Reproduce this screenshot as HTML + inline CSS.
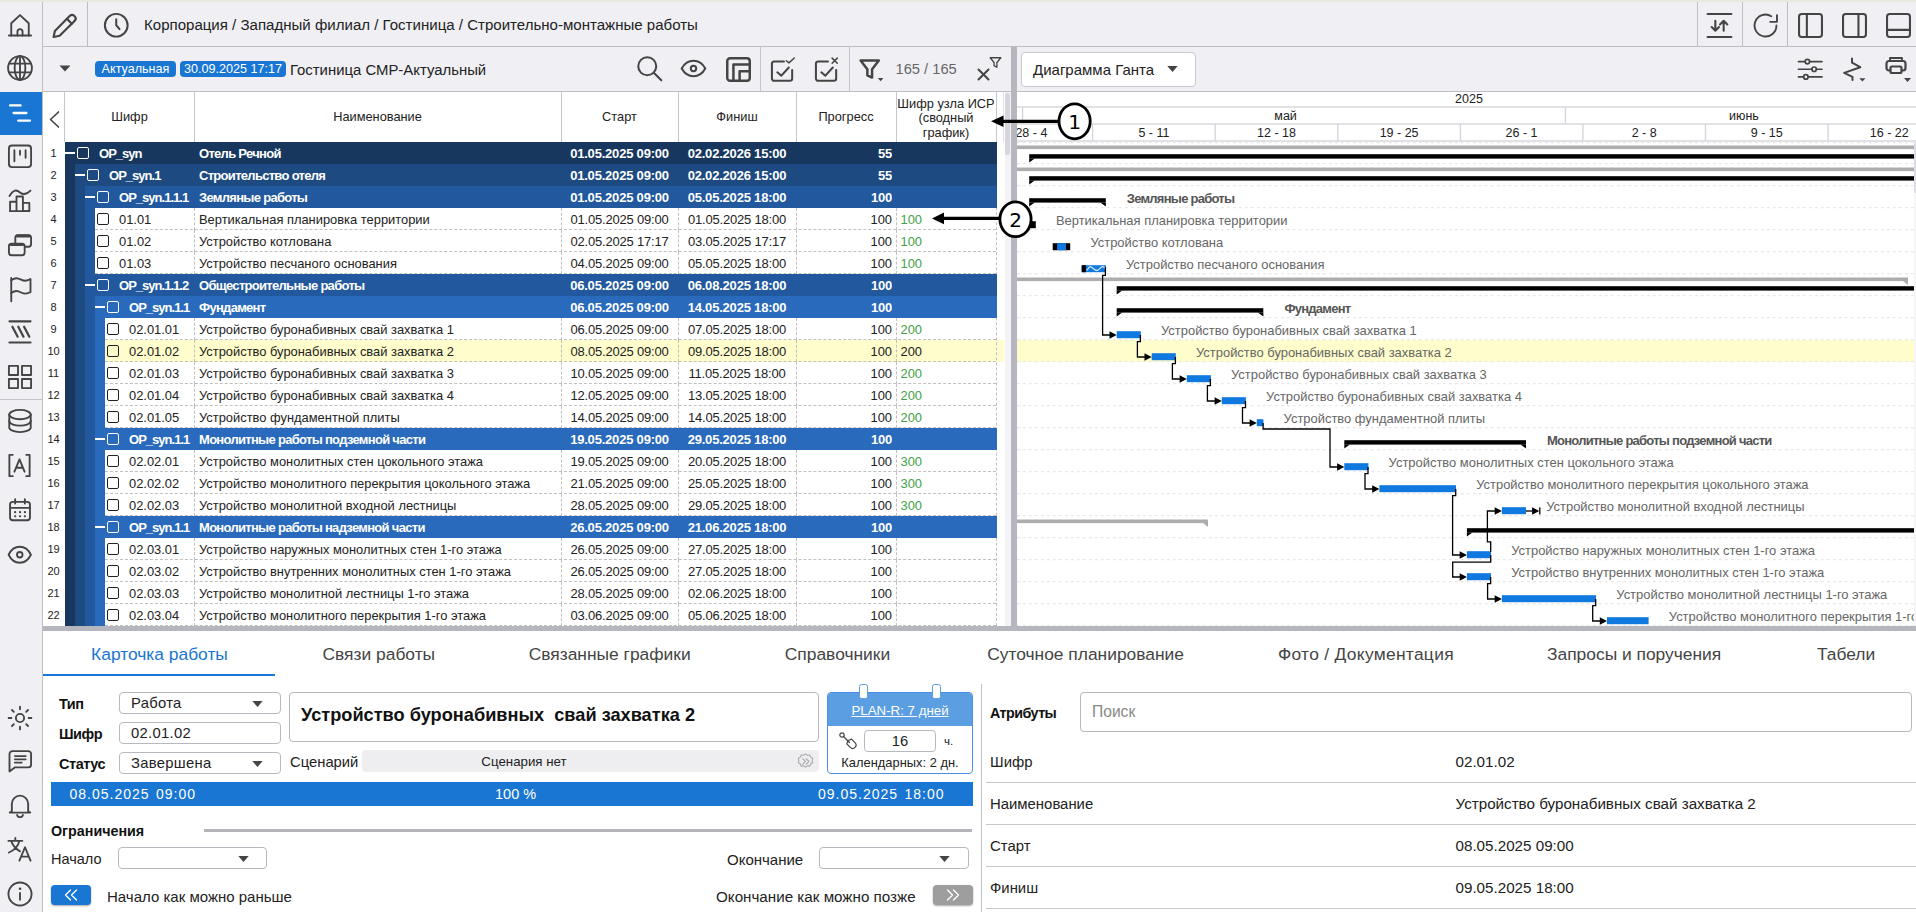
<!DOCTYPE html><html lang="ru"><head><meta charset="utf-8"><title>Gantt</title><style>
*{box-sizing:border-box}
html,body{margin:0;padding:0}
body{width:1916px;height:912px;position:relative;overflow:hidden;background:#fff;
 font-family:"Liberation Sans",sans-serif;color:#222;font-size:13px}
.abs{position:absolute}
.t{position:absolute;white-space:nowrap;line-height:1}
svg{position:absolute;overflow:visible}
.ic{fill:none;stroke:#444;stroke-width:1.8;stroke-linecap:round;stroke-linejoin:round}

.th{position:absolute;top:92.400px;height:50px;display:flex;align-items:center;justify-content:center;text-align:center;font-size:12.8px;color:#222;line-height:14.300px}
.rn{position:absolute;left:43px;width:21px;text-align:center;font-size:11px;color:#222;line-height:23.400px;height:22px}
.c{position:absolute;white-space:nowrap;overflow:hidden;height:22px;line-height:23px;font-size:12.900px}
.sb{font-weight:bold;color:#fff;letter-spacing:-0.7px;font-size:13px}
.sc{font-weight:bold;color:#fff;letter-spacing:-0.98px;font-size:13px}
.sd{font-weight:bold;color:#fff;letter-spacing:-0.2px;font-size:13px}
.dt{letter-spacing:-0.2px;font-size:13px}
.cb{position:absolute;width:12px;height:12px;border-radius:2px}
</style></head><body>
<div class="abs" style="left:0;top:0;width:1916px;height:92px;background:#f0f0f4"></div>
<div class="abs" style="left:0;top:0;width:42px;height:912px;background:#f0f0f4"></div>
<div class="abs" style="left:0;top:0;width:1916px;height:2px;background:#e6e9dd"></div>
<div class="abs" style="left:42px;top:2px;width:1px;height:910px;background:#bdbdc6"></div>
<div class="abs" style="left:43px;top:46px;width:1873px;height:1px;background:#bdbdc6"></div>
<div class="abs" style="left:43px;top:91px;width:1873px;height:1px;background:#bdbdc6"></div>
<div class="abs" style="left:0;top:92px;width:42px;height:43px;background:#1976d2"></div>
<svg style="left:5.8px;top:10.5px" width="28" height="28" viewBox="0 0 24 24" fill="none" stroke="#444" stroke-width="1.6" stroke-linecap="round" stroke-linejoin="round"><path d="M2.5 21h19"/><path d="M4.5 21V10.5L12 3.5l7.500 7V21"/><path d="M9.800 21v-3.300a2.200 2.200 0 0 1 4.400 0V21"/></svg>
<svg style="left:5.8px;top:54.4px" width="28" height="28" viewBox="0 0 24 24" fill="none" stroke="#444" stroke-width="1.6" stroke-linecap="round" stroke-linejoin="round"><circle cx="12" cy="12" r="10.200"/><ellipse cx="12" cy="12" rx="4.600" ry="10.200"/><path d="M12 1.800v20.400M2.800 8.300h18.400M2.800 15.700h18.400"/></svg>
<svg style="left:5.8px;top:98.8px" width="28" height="28" viewBox="0 0 24 24" fill="none" stroke="#fff" stroke-width="2.0" stroke-linecap="round" stroke-linejoin="round"><path d="M3.500 5.500h9M6.500 12h11M10.500 18.500h10"/></svg>
<svg style="left:5.8px;top:142.0px" width="28" height="28" viewBox="0 0 24 24" fill="none" stroke="#444" stroke-width="1.6" stroke-linecap="round" stroke-linejoin="round"><rect x="2.500" y="3" width="19" height="18.500" rx="2.600"/><path d="M7.200 7v9.500M12 7.500v3.500M16.800 7v6.500"/></svg>
<svg style="left:5.8px;top:186.0px" width="28" height="28" viewBox="0 0 24 24" fill="none" stroke="#444" stroke-width="1.6" stroke-linecap="round" stroke-linejoin="round"><path d="M3.500 21.500v-8h5.500v8M9 21.500v-12.500h5.500v12.500M14.500 21.500v-7h5.500v7z"/><path d="M3.500 21.500h16.500"/><path d="M3 8.500c3.500-5.500 6-5.500 9-3s6 1.500 9-1.500"/></svg>
<svg style="left:5.8px;top:231.0px" width="28" height="28" viewBox="0 0 24 24" fill="none" stroke="#444" stroke-width="1.6" stroke-linecap="round" stroke-linejoin="round"><rect x="8" y="3.500" width="13.500" height="10" rx="2.300"/><path d="M9.500 4.300h10.500" stroke-width="2.400"/><rect x="2.500" y="10.800" width="13.500" height="10" rx="2.300" fill="#f0f0f4"/><path d="M4 11.600h10.500" stroke-width="2.400"/></svg>
<svg style="left:5.8px;top:274.5px" width="28" height="28" viewBox="0 0 24 24" fill="none" stroke="#444" stroke-width="1.6" stroke-linecap="round" stroke-linejoin="round"><path d="M4.500 2.500v20"/><path d="M4.500 4.500c3.500-2.500 5.500-2 8.500-0.500s5 1.500 8-0.500v11c-3 2-5 2-8 0.500s-5-2-8.500 0.500"/></svg>
<svg style="left:5.8px;top:318.0px" width="28" height="28" viewBox="0 0 24 24" fill="none" stroke="#444" stroke-width="1.6" stroke-linecap="round" stroke-linejoin="round"><path d="M3 2.800h18M3 21h18" stroke-width="1.900"/><path d="M5.500 7.500l4.500 8.500M10.500 7.500l4.500 8.500M15.500 7.500l4.500 8.500" stroke-width="1.900"/></svg>
<svg style="left:5.8px;top:362.6px" width="28" height="28" viewBox="0 0 24 24" fill="none" stroke="#444" stroke-width="1.6" stroke-linecap="round" stroke-linejoin="round"><rect x="2.500" y="2.500" width="7.800" height="7.800"/><rect x="13.700" y="2.500" width="7.800" height="7.800"/><rect x="2.500" y="13.700" width="7.800" height="7.800"/><rect x="13.700" y="13.700" width="7.800" height="7.800"/></svg>
<svg style="left:5.8px;top:407.3px" width="28" height="28" viewBox="0 0 24 24" fill="none" stroke="#444" stroke-width="1.6" stroke-linecap="round" stroke-linejoin="round"><ellipse cx="12" cy="6.500" rx="9.200" ry="4"/><path d="M2.800 6.500v11c0 2.200 4.100 4 9.200 4s9.200-1.800 9.200-4v-11"/><path d="M2.800 12c0 2.200 4.100 4 9.200 4s9.200-1.800 9.200-4"/></svg>
<svg style="left:6.3px;top:452.1px" width="27" height="27" viewBox="0 0 24 24" fill="none" stroke="#444" stroke-width="1.6592592592592594" stroke-linecap="round" stroke-linejoin="round"><path d="M6 2.500H3v19h3M18 2.500h3v19h-3"/><path d="M7.500 17.500L12 6.500l4.500 11M9 14h6"/></svg>
<svg style="left:6.8px;top:496.5px" width="26" height="26" viewBox="0 0 24 24" fill="none" stroke="#444" stroke-width="1.7230769230769232" stroke-linecap="round" stroke-linejoin="round"><rect x="2.800" y="4.500" width="18.400" height="17" rx="2.500"/><path d="M2.800 10h18.400M7.500 2v4M16.500 2v4"/><path d="M7.500 14h.1M12 14h.1M16.500 14h.1M7.500 17.800h.1M12 17.800h.1M16.500 17.800h.1" stroke-width="2"/></svg>
<svg style="left:7.1px;top:541.5px" width="25.5" height="25.5" viewBox="0 0 24 24" fill="none" stroke="#444" stroke-width="1.7568627450980394" stroke-linecap="round" stroke-linejoin="round"><path d="M1.500 12c2.500-5 6-7.500 10.500-7.500s8 2.500 10.500 7.500c-2.500 5-6 7.500-10.500 7.500s-8-2.500-10.500-7.500z"/><circle cx="12" cy="12" r="2.600"/></svg>
<svg style="left:6.8px;top:705.0px" width="26" height="26" viewBox="0 0 24 24" fill="none" stroke="#444" stroke-width="1.7230769230769232" stroke-linecap="round" stroke-linejoin="round"><circle cx="12" cy="12" r="3.800"/><path d="M12 1.500v2.500M12 20v2.500M1.500 12h2.500M20 12h2.500M4.600 4.600l1.700 1.700M17.700 17.700l1.700 1.700M4.600 19.400l1.700-1.700M17.700 6.300l1.700-1.700"/></svg>
<svg style="left:5.8px;top:747.0px" width="28" height="28" viewBox="0 0 24 24" fill="none" stroke="#444" stroke-width="1.6" stroke-linecap="round" stroke-linejoin="round"><path d="M5.500 3.500h13.500a2.500 2.500 0 0 1 2.500 2.500v9a2.500 2.500 0 0 1-2.500 2.500H7.500l-4.500 3.500V6a2.500 2.500 0 0 1 2.500-2.500z"/><path d="M7.500 7.800h9.500M7.500 10.600h9.500M7.500 13.400h6" stroke-width="1.400"/></svg>
<svg style="left:5.8px;top:791.3px" width="28" height="28" viewBox="0 0 24 24" fill="none" stroke="#444" stroke-width="1.6" stroke-linecap="round" stroke-linejoin="round"><path d="M5 17.500V11a7 7 0 0 1 14 0v6.500l1.800 1H3.200z" /><path d="M9.500 20.500a2.600 2.600 0 0 0 5 0"/></svg>
<svg style="left:5.8px;top:835.0px" width="28" height="28" viewBox="0 0 24 24" fill="none" stroke="#444" stroke-width="1.6" stroke-linecap="round" stroke-linejoin="round"><path d="M2 5h12M8 2.500V5M11.500 5c-1 4.500-4.500 8-9 10M4.500 5c1 4 4 7 7.500 9"/><path d="M11.500 22l4.800-11.500L21 22M13 18.500h6.600"/></svg>
<svg style="left:5.8px;top:880.2px" width="28" height="28" viewBox="0 0 24 24" fill="none" stroke="#444" stroke-width="1.6" stroke-linecap="round" stroke-linejoin="round"><circle cx="12" cy="12" r="9.900"/><path d="M12 11v6"/><path d="M12 7.500h.1" stroke-width="2.200"/></svg>
<div class="abs" style="left:0;top:399px;width:42px;height:1px;background:#c4c4cc"></div>
<svg style="left:50.0px;top:10.5px" width="29" height="29" viewBox="0 0 24 24" fill="none" stroke="#444" stroke-width="1.8" stroke-linecap="round" stroke-linejoin="round"><path d="M3 21.500l1-5L16.500 4a2.500 2.500 0 0 1 3.500 0l0.500 0.500a2.500 2.500 0 0 1 0 3.500L8 20.500z"/><path d="M14 6.500l4 4"/></svg>
<div class="abs" style="left:87px;top:2px;width:1px;height:44px;background:#bdbdc6"></div>
<svg style="left:102.8px;top:11.8px" width="26.5" height="26.5" viewBox="0 0 24 24" fill="none" stroke="#444" stroke-width="1.8" stroke-linecap="round" stroke-linejoin="round"><circle cx="12" cy="12" r="10.300"/><path d="M12 6.500V12l3 3.500"/></svg>
<div class="t" style="left:144px;top:17px;font-size:15.05px;color:#222">Корпорация / Западный филиал / Гостиница / Строительно-монтажные работы</div>
<div class="abs" style="left:1697px;top:2px;width:1px;height:44px;background:#bdbdc6"></div>
<div class="abs" style="left:1742px;top:2px;width:1px;height:44px;background:#bdbdc6"></div>
<div class="abs" style="left:1787px;top:2px;width:1px;height:44px;background:#bdbdc6"></div>
<svg style="left:1707.3px;top:12.5px" width="25" height="25" viewBox="0 0 24 24" fill="none" stroke="#444" stroke-width="1.8" stroke-linecap="round" stroke-linejoin="round"><path d="M0.500 1h23M0.500 23h23"/><path d="M8 7.500v9.500M4.500 13.500L8 17l3.500-3.500M16 17V7.500M12.500 11L16 7.500l3.500 3.500" stroke-width="2"/></svg>
<svg style="left:1752.5px;top:12.5px" width="25" height="25" viewBox="0 0 24 24" fill="none" stroke="#444" stroke-width="1.8" stroke-linecap="round" stroke-linejoin="round"><path d="M22.500 12A10.500 10.500 0 1 1 17.500 3.100"/><path d="M16.500 8.500h6.500V2"/></svg>
<svg style="left:1797.5px;top:12.5px" width="25" height="25" viewBox="0 0 24 24" fill="none" stroke="#444" stroke-width="2" stroke-linecap="round" stroke-linejoin="round"><rect x="1" y="1" width="22" height="22" rx="2.500"/><path d="M8.500 1v22"/></svg>
<svg style="left:1841.5px;top:12.5px" width="25" height="25" viewBox="0 0 24 24" fill="none" stroke="#444" stroke-width="2" stroke-linecap="round" stroke-linejoin="round"><rect x="1" y="1" width="22" height="22" rx="2.500"/><path d="M15.800 1v22"/></svg>
<svg style="left:1885.5px;top:12.5px" width="25" height="25" viewBox="0 0 24 24" fill="none" stroke="#444" stroke-width="2" stroke-linecap="round" stroke-linejoin="round"><rect x="1" y="1" width="22" height="22" rx="2.500"/><path d="M1 16.200h22"/></svg>
<svg style="left:59px;top:65px" width="12" height="7" viewBox="0 0 12 7"><path d="M0.500 0.500h11L6 6.500z" fill="#444"/></svg>
<div class="t" style="left:95px;top:61px;width:81px;height:16px;background:#1976d2;border-radius:4px;color:#fff;font-size:12.6px;line-height:16px;text-align:center">Актуальная</div>
<div class="t" style="left:180px;top:61px;width:106px;height:16px;background:#1976d2;border-radius:4px;color:#fff;font-size:12.6px;line-height:16px;text-align:center">30.09.2025 17:17</div>
<div class="t" style="left:290px;top:63px;font-size:14.9px;color:#222">Гостиница СМР-Актуальный</div>
<svg style="left:635.5px;top:55.3px" width="27" height="27" viewBox="0 0 24 24" fill="none" stroke="#444" stroke-width="1.8" stroke-linecap="round" stroke-linejoin="round"><circle cx="10" cy="10" r="8"/><path d="M15.800 15.800L22.500 22.500"/></svg>
<svg style="left:680.2px;top:55.1px" width="27" height="27" viewBox="0 0 24 24" fill="none" stroke="#444" stroke-width="1.8" stroke-linecap="round" stroke-linejoin="round"><path d="M1.500 12c2.500-4.500 6-6.800 10.500-6.800s8 2.300 10.500 6.800c-2.500 4.500-6 6.800-10.500 6.800s-8-2.300-10.500-6.800z"/><circle cx="12" cy="12" r="2.400"/></svg>
<svg style="left:724.5px;top:55.5px" width="27" height="27" viewBox="0 0 24 24" fill="none" stroke="#444" stroke-width="1.8" stroke-linecap="round" stroke-linejoin="round"><rect x="2" y="2" width="20" height="20" rx="2.500" stroke-width="2.200"/><path d="M7.500 22V7.500H22M13 22v-8.500h9" stroke-width="2.200"/></svg>
<div class="abs" style="left:760px;top:47px;width:1px;height:44px;background:#c4c4cc"></div>
<svg style="left:768.9px;top:56.5px" width="27" height="27" viewBox="0 0 24 24" fill="none" stroke="#444" stroke-width="1.8" stroke-linecap="round" stroke-linejoin="round"><path d="M20.600 11.500v7.700a2 2 0 0 1-2 2H4.600a2 2 0 0 1-2-2V5.900a2 2 0 0 1 2-2h8.700"/><path d="M7.400 13.600l3.600 3l6.600-7.300"/><path d="M15.400 3.300l2.300 1.900l4.800-4.300" stroke-width="1.300"/></svg>
<svg style="left:813.2px;top:56.5px" width="27" height="27" viewBox="0 0 24 24" fill="none" stroke="#444" stroke-width="1.8" stroke-linecap="round" stroke-linejoin="round"><path d="M20.600 11.500v7.700a2 2 0 0 1-2 2H4.600a2 2 0 0 1-2-2V5.900a2 2 0 0 1 2-2h8.700"/><path d="M7.400 13.600l3.600 3l6.600-7.300"/><path d="M17 1l4.600 4.500M21.600 1l-4.600 4.500" stroke-width="1.300"/></svg>
<div class="abs" style="left:849px;top:47px;width:1px;height:44px;background:#c4c4cc"></div>
<svg style="left:857.0px;top:55.5px" width="27" height="27" viewBox="0 0 24 24" fill="none" stroke="#444" stroke-width="1.8" stroke-linecap="round" stroke-linejoin="round"><path d="M3.200 4h16.200l-6 7.800v7.400l-4.200-2v-5.400z" stroke-width="2.200"/><path d="M18.500 19.600h5l-2.500 2.800z" fill="#444" stroke="none"/></svg>
<div class="t" style="left:895.5px;top:62px;font-size:14.7px;color:#666">165 / 165</div>
<svg style="left:976.5px;top:68.0px" width="13" height="13" viewBox="0 0 13 13" fill="none" stroke="#444" stroke-width="2" stroke-linecap="round" stroke-linejoin="round"><path d="M1.500 1.500l10 10M11.500 1.500l-10 10"/></svg>
<svg style="left:988.7px;top:55.8px" width="13" height="13" viewBox="0 0 11 11" fill="none" stroke="#444" stroke-width="1.1" stroke-linecap="round" stroke-linejoin="round"><path d="M1 1.500h9l-3.300 4v4l-2.400-1.300v-2.700z"/></svg>
<div class="abs" style="left:1021px;top:51.500px;width:175px;height:35.500px;background:#fff;border:1px solid #c8c8d0;border-radius:4px"></div>
<div class="t" style="left:1033px;top:62px;font-size:15px;color:#222">Диаграмма Ганта</div>
<svg style="left:1167px;top:66px" width="11" height="6" viewBox="0 0 11 6"><path d="M0.300 0h10.400L5.500 6z" fill="#444"/></svg>
<svg style="left:1797.8px;top:56.8px" width="24.5" height="24.5" viewBox="0 0 24 24" fill="none" stroke="#444" stroke-width="1.7" stroke-linecap="round" stroke-linejoin="round"><path d="M0.500 4.500h6.500M11.500 4.500h12M0.500 12h13M18 12h5.500M0.500 19.500h5M10 19.500h13.500"/><circle cx="9.200" cy="4.500" r="2.200"/><circle cx="15.800" cy="12" r="2.200"/><circle cx="7.700" cy="19.500" r="2.200"/></svg>
<svg style="left:1840.0px;top:56.5px" width="25" height="25" viewBox="0 0 24 24" fill="none" stroke="#444" stroke-width="1.8" stroke-linecap="round" stroke-linejoin="round"><path d="M11.500 1.500v4l8 4.300L4 15.300l8 3.700v3" stroke-width="1.900"/><path d="M18.500 20.500h6l-3 3z" fill="#444" stroke="none"/></svg>
<svg style="left:1885.0px;top:56.0px" width="22" height="22" viewBox="0 0 22 22" fill="none" stroke="#444" stroke-width="1.8" stroke-linecap="round" stroke-linejoin="round"><path d="M5 5V2h12v3"/><rect x="1.500" y="5" width="19" height="9.500" rx="2.500" stroke-width="2.200"/><rect x="5.500" y="10.500" width="11" height="6.500" rx="1.500" fill="#f0f0f4" stroke-width="2.200"/></svg>
<svg style="left:1903.500px;top:78px" width="7" height="4" viewBox="0 0 7 4"><path d="M0 0h7L3.500 4z" fill="#444"/></svg>
<div class="abs" style="left:43px;top:92px;width:968px;height:534px;background:#fff"></div>
<div class="th" style="left:65px;width:129px">Шифр</div>
<div class="th" style="left:194px;width:367px">Наименование</div>
<div class="th" style="left:561px;width:117px">Старт</div>
<div class="th" style="left:678px;width:118px">Финиш</div>
<div class="th" style="left:796px;width:100px">Прогресс</div>
<div class="th" style="left:896px;width:100px;top:93.400px;line-height:14.500px">Шифр узла ИСР<br>(сводный<br>график)</div>
<div class="abs" style="left:64px;top:92px;width:1px;height:50px;background:#c6c6ce"></div>
<div class="abs" style="left:194px;top:92px;width:1px;height:50px;background:#c6c6ce"></div>
<div class="abs" style="left:561px;top:92px;width:1px;height:50px;background:#c6c6ce"></div>
<div class="abs" style="left:678px;top:92px;width:1px;height:50px;background:#c6c6ce"></div>
<div class="abs" style="left:796px;top:92px;width:1px;height:50px;background:#c6c6ce"></div>
<div class="abs" style="left:896px;top:92px;width:1px;height:50px;background:#c6c6ce"></div>
<div class="abs" style="left:996px;top:92px;width:1px;height:50px;background:#c6c6ce"></div>
<svg style="left:49px;top:111px" width="11" height="17" viewBox="0 0 11 17" fill="none" stroke="#444" stroke-width="1.700" stroke-linecap="round" stroke-linejoin="round"><path d="M9.500 1L1.500 8.500l8 7.500"/></svg>
<div class="abs" style="left:996px;top:142px;width:0;height:484px;border-left:1px dashed #c0c0c0"></div>
<div class="rn" style="top:142px">1</div>
<div class="abs" style="left:65px;top:142px;width:932px;height:22px;background:#17375f"></div>
<div class="abs" style="left:65.3px;top:152px;width:9.400px;height:2px;background:#fff"></div>
<div class="cb" style="left:77px;top:147px;border:1.500px solid #fff"></div>
<div class="c sc" style="left:99px;top:142px;width:95px">OP_syn</div>
<div class="c sb" style="left:199px;top:142px;width:360px">Отель Речной</div>
<div class="c sd" style="left:561px;top:142px;width:117px;text-align:center">01.05.2025 09:00</div>
<div class="c sd" style="left:678px;top:142px;width:118px;text-align:center">02.02.2026 15:00</div>
<div class="c sd" style="left:796px;top:142px;width:96px;text-align:right">55</div>
<div class="rn" style="top:164px">2</div>
<div class="abs" style="left:65px;top:164px;width:10px;height:22px;background:#17375f"></div>
<div class="abs" style="left:75px;top:164px;width:922px;height:22px;background:#1d4a80"></div>
<div class="abs" style="left:75.3px;top:174px;width:9.400px;height:2px;background:#fff"></div>
<div class="cb" style="left:87px;top:169px;border:1.500px solid #fff"></div>
<div class="c sc" style="left:109px;top:164px;width:85px">OP_syn.1</div>
<div class="c sb" style="left:199px;top:164px;width:360px">Строительство отеля</div>
<div class="c sd" style="left:561px;top:164px;width:117px;text-align:center">01.05.2025 09:00</div>
<div class="c sd" style="left:678px;top:164px;width:118px;text-align:center">02.02.2026 15:00</div>
<div class="c sd" style="left:796px;top:164px;width:96px;text-align:right">55</div>
<div class="rn" style="top:186px">3</div>
<div class="abs" style="left:65px;top:186px;width:10px;height:22px;background:#17375f"></div>
<div class="abs" style="left:75px;top:186px;width:10px;height:22px;background:#1d4a80"></div>
<div class="abs" style="left:85px;top:186px;width:912px;height:22px;background:#22589d"></div>
<div class="abs" style="left:85.3px;top:196px;width:9.400px;height:2px;background:#fff"></div>
<div class="cb" style="left:97px;top:191px;border:1.500px solid #fff"></div>
<div class="c sc" style="left:119px;top:186px;width:75px">OP_syn.1.1.1</div>
<div class="c sb" style="left:199px;top:186px;width:360px">Земляные работы</div>
<div class="c sd" style="left:561px;top:186px;width:117px;text-align:center">01.05.2025 09:00</div>
<div class="c sd" style="left:678px;top:186px;width:118px;text-align:center">05.05.2025 18:00</div>
<div class="c sd" style="left:796px;top:186px;width:96px;text-align:right">100</div>
<div class="rn" style="top:208px">4</div>
<div class="abs" style="left:65px;top:208px;width:10px;height:22px;background:#17375f"></div>
<div class="abs" style="left:75px;top:208px;width:10px;height:22px;background:#1d4a80"></div>
<div class="abs" style="left:85px;top:208px;width:10px;height:22px;background:#22589d"></div>
<div class="abs" style="left:95px;top:208px;width:901px;height:22px;background:#fff;border-bottom:1px dashed #c0c0c0"></div>
<div class="abs" style="left:194px;top:208px;width:0;height:22px;border-left:1px dashed #c0c0c0"></div>
<div class="abs" style="left:561px;top:208px;width:0;height:22px;border-left:1px dashed #c0c0c0"></div>
<div class="abs" style="left:678px;top:208px;width:0;height:22px;border-left:1px dashed #c0c0c0"></div>
<div class="abs" style="left:796px;top:208px;width:0;height:22px;border-left:1px dashed #c0c0c0"></div>
<div class="abs" style="left:896px;top:208px;width:0;height:22px;border-left:1px dashed #c0c0c0"></div>
<div class="cb" style="left:97px;top:213px;border:1.500px solid #222;background:#fff"></div>
<div class="c" style="left:119px;top:208px;width:75px">01.01</div>
<div class="c" style="left:199px;top:208px;width:360px">Вертикальная планировка территории</div>
<div class="c dt" style="left:561px;top:208px;width:117px;text-align:center">01.05.2025 09:00</div>
<div class="c dt" style="left:678px;top:208px;width:118px;text-align:center">01.05.2025 18:00</div>
<div class="c" style="left:796px;top:208px;width:96px;text-align:right">100</div>
<div class="c" style="left:900.500px;top:208px;width:90px;color:#43a047">100</div>
<div class="rn" style="top:230px">5</div>
<div class="abs" style="left:65px;top:230px;width:10px;height:22px;background:#17375f"></div>
<div class="abs" style="left:75px;top:230px;width:10px;height:22px;background:#1d4a80"></div>
<div class="abs" style="left:85px;top:230px;width:10px;height:22px;background:#22589d"></div>
<div class="abs" style="left:95px;top:230px;width:901px;height:22px;background:#fff;border-bottom:1px dashed #c0c0c0"></div>
<div class="abs" style="left:194px;top:230px;width:0;height:22px;border-left:1px dashed #c0c0c0"></div>
<div class="abs" style="left:561px;top:230px;width:0;height:22px;border-left:1px dashed #c0c0c0"></div>
<div class="abs" style="left:678px;top:230px;width:0;height:22px;border-left:1px dashed #c0c0c0"></div>
<div class="abs" style="left:796px;top:230px;width:0;height:22px;border-left:1px dashed #c0c0c0"></div>
<div class="abs" style="left:896px;top:230px;width:0;height:22px;border-left:1px dashed #c0c0c0"></div>
<div class="cb" style="left:97px;top:235px;border:1.500px solid #222;background:#fff"></div>
<div class="c" style="left:119px;top:230px;width:75px">01.02</div>
<div class="c" style="left:199px;top:230px;width:360px">Устройство котлована</div>
<div class="c dt" style="left:561px;top:230px;width:117px;text-align:center">02.05.2025 17:17</div>
<div class="c dt" style="left:678px;top:230px;width:118px;text-align:center">03.05.2025 17:17</div>
<div class="c" style="left:796px;top:230px;width:96px;text-align:right">100</div>
<div class="c" style="left:900.500px;top:230px;width:90px;color:#43a047">100</div>
<div class="rn" style="top:252px">6</div>
<div class="abs" style="left:65px;top:252px;width:10px;height:22px;background:#17375f"></div>
<div class="abs" style="left:75px;top:252px;width:10px;height:22px;background:#1d4a80"></div>
<div class="abs" style="left:85px;top:252px;width:10px;height:22px;background:#22589d"></div>
<div class="abs" style="left:95px;top:252px;width:901px;height:22px;background:#fff;border-bottom:1px dashed #c0c0c0"></div>
<div class="abs" style="left:194px;top:252px;width:0;height:22px;border-left:1px dashed #c0c0c0"></div>
<div class="abs" style="left:561px;top:252px;width:0;height:22px;border-left:1px dashed #c0c0c0"></div>
<div class="abs" style="left:678px;top:252px;width:0;height:22px;border-left:1px dashed #c0c0c0"></div>
<div class="abs" style="left:796px;top:252px;width:0;height:22px;border-left:1px dashed #c0c0c0"></div>
<div class="abs" style="left:896px;top:252px;width:0;height:22px;border-left:1px dashed #c0c0c0"></div>
<div class="cb" style="left:97px;top:257px;border:1.500px solid #222;background:#fff"></div>
<div class="c" style="left:119px;top:252px;width:75px">01.03</div>
<div class="c" style="left:199px;top:252px;width:360px">Устройство песчаного основания</div>
<div class="c dt" style="left:561px;top:252px;width:117px;text-align:center">04.05.2025 09:00</div>
<div class="c dt" style="left:678px;top:252px;width:118px;text-align:center">05.05.2025 18:00</div>
<div class="c" style="left:796px;top:252px;width:96px;text-align:right">100</div>
<div class="c" style="left:900.500px;top:252px;width:90px;color:#43a047">100</div>
<div class="rn" style="top:274px">7</div>
<div class="abs" style="left:65px;top:274px;width:10px;height:22px;background:#17375f"></div>
<div class="abs" style="left:75px;top:274px;width:10px;height:22px;background:#1d4a80"></div>
<div class="abs" style="left:85px;top:274px;width:912px;height:22px;background:#22589d"></div>
<div class="abs" style="left:85.3px;top:284px;width:9.400px;height:2px;background:#fff"></div>
<div class="cb" style="left:97px;top:279px;border:1.500px solid #fff"></div>
<div class="c sc" style="left:119px;top:274px;width:75px">OP_syn.1.1.2</div>
<div class="c sb" style="left:199px;top:274px;width:360px">Общестроительные работы</div>
<div class="c sd" style="left:561px;top:274px;width:117px;text-align:center">06.05.2025 09:00</div>
<div class="c sd" style="left:678px;top:274px;width:118px;text-align:center">06.08.2025 18:00</div>
<div class="c sd" style="left:796px;top:274px;width:96px;text-align:right">100</div>
<div class="rn" style="top:296px">8</div>
<div class="abs" style="left:65px;top:296px;width:10px;height:22px;background:#17375f"></div>
<div class="abs" style="left:75px;top:296px;width:10px;height:22px;background:#1d4a80"></div>
<div class="abs" style="left:85px;top:296px;width:10px;height:22px;background:#22589d"></div>
<div class="abs" style="left:95px;top:296px;width:902px;height:22px;background:#2a6abc"></div>
<div class="abs" style="left:95.3px;top:306px;width:9.400px;height:2px;background:#fff"></div>
<div class="cb" style="left:107px;top:301px;border:1.500px solid #fff"></div>
<div class="c sc" style="left:129px;top:296px;width:65px">OP_syn.1.1</div>
<div class="c sb" style="left:199px;top:296px;width:360px">Фундамент</div>
<div class="c sd" style="left:561px;top:296px;width:117px;text-align:center">06.05.2025 09:00</div>
<div class="c sd" style="left:678px;top:296px;width:118px;text-align:center">14.05.2025 18:00</div>
<div class="c sd" style="left:796px;top:296px;width:96px;text-align:right">100</div>
<div class="rn" style="top:318px">9</div>
<div class="abs" style="left:65px;top:318px;width:10px;height:22px;background:#17375f"></div>
<div class="abs" style="left:75px;top:318px;width:10px;height:22px;background:#1d4a80"></div>
<div class="abs" style="left:85px;top:318px;width:10px;height:22px;background:#22589d"></div>
<div class="abs" style="left:95px;top:318px;width:10px;height:22px;background:#2a6abc"></div>
<div class="abs" style="left:105px;top:318px;width:891px;height:22px;background:#fff;border-bottom:1px dashed #c0c0c0"></div>
<div class="abs" style="left:194px;top:318px;width:0;height:22px;border-left:1px dashed #c0c0c0"></div>
<div class="abs" style="left:561px;top:318px;width:0;height:22px;border-left:1px dashed #c0c0c0"></div>
<div class="abs" style="left:678px;top:318px;width:0;height:22px;border-left:1px dashed #c0c0c0"></div>
<div class="abs" style="left:796px;top:318px;width:0;height:22px;border-left:1px dashed #c0c0c0"></div>
<div class="abs" style="left:896px;top:318px;width:0;height:22px;border-left:1px dashed #c0c0c0"></div>
<div class="cb" style="left:107px;top:323px;border:1.500px solid #222;background:#fff"></div>
<div class="c" style="left:129px;top:318px;width:65px">02.01.01</div>
<div class="c" style="left:199px;top:318px;width:360px">Устройство буронабивных свай захватка 1</div>
<div class="c dt" style="left:561px;top:318px;width:117px;text-align:center">06.05.2025 09:00</div>
<div class="c dt" style="left:678px;top:318px;width:118px;text-align:center">07.05.2025 18:00</div>
<div class="c" style="left:796px;top:318px;width:96px;text-align:right">100</div>
<div class="c" style="left:900.500px;top:318px;width:90px;color:#43a047">200</div>
<div class="rn" style="top:340px">10</div>
<div class="abs" style="left:65px;top:340px;width:10px;height:22px;background:#17375f"></div>
<div class="abs" style="left:75px;top:340px;width:10px;height:22px;background:#1d4a80"></div>
<div class="abs" style="left:85px;top:340px;width:10px;height:22px;background:#22589d"></div>
<div class="abs" style="left:95px;top:340px;width:10px;height:22px;background:#2a6abc"></div>
<div class="abs" style="left:105px;top:340px;width:891px;height:22px;background:#fffdcc;border-bottom:1px dashed #c0c0c0"></div>
<div class="abs" style="left:194px;top:340px;width:0;height:22px;border-left:1px dashed #c0c0c0"></div>
<div class="abs" style="left:561px;top:340px;width:0;height:22px;border-left:1px dashed #c0c0c0"></div>
<div class="abs" style="left:678px;top:340px;width:0;height:22px;border-left:1px dashed #c0c0c0"></div>
<div class="abs" style="left:796px;top:340px;width:0;height:22px;border-left:1px dashed #c0c0c0"></div>
<div class="abs" style="left:896px;top:340px;width:0;height:22px;border-left:1px dashed #c0c0c0"></div>
<div class="cb" style="left:107px;top:345px;border:1.500px solid #222;background:#fffdcc"></div>
<div class="c" style="left:129px;top:340px;width:65px">02.01.02</div>
<div class="c" style="left:199px;top:340px;width:360px">Устройство буронабивных свай захватка 2</div>
<div class="c dt" style="left:561px;top:340px;width:117px;text-align:center">08.05.2025 09:00</div>
<div class="c dt" style="left:678px;top:340px;width:118px;text-align:center">09.05.2025 18:00</div>
<div class="c" style="left:796px;top:340px;width:96px;text-align:right">100</div>
<div class="c" style="left:900.500px;top:340px;width:90px;color:#222">200</div>
<div class="rn" style="top:362px">11</div>
<div class="abs" style="left:65px;top:362px;width:10px;height:22px;background:#17375f"></div>
<div class="abs" style="left:75px;top:362px;width:10px;height:22px;background:#1d4a80"></div>
<div class="abs" style="left:85px;top:362px;width:10px;height:22px;background:#22589d"></div>
<div class="abs" style="left:95px;top:362px;width:10px;height:22px;background:#2a6abc"></div>
<div class="abs" style="left:105px;top:362px;width:891px;height:22px;background:#fff;border-bottom:1px dashed #c0c0c0"></div>
<div class="abs" style="left:194px;top:362px;width:0;height:22px;border-left:1px dashed #c0c0c0"></div>
<div class="abs" style="left:561px;top:362px;width:0;height:22px;border-left:1px dashed #c0c0c0"></div>
<div class="abs" style="left:678px;top:362px;width:0;height:22px;border-left:1px dashed #c0c0c0"></div>
<div class="abs" style="left:796px;top:362px;width:0;height:22px;border-left:1px dashed #c0c0c0"></div>
<div class="abs" style="left:896px;top:362px;width:0;height:22px;border-left:1px dashed #c0c0c0"></div>
<div class="cb" style="left:107px;top:367px;border:1.500px solid #222;background:#fff"></div>
<div class="c" style="left:129px;top:362px;width:65px">02.01.03</div>
<div class="c" style="left:199px;top:362px;width:360px">Устройство буронабивных свай захватка 3</div>
<div class="c dt" style="left:561px;top:362px;width:117px;text-align:center">10.05.2025 09:00</div>
<div class="c dt" style="left:678px;top:362px;width:118px;text-align:center">11.05.2025 18:00</div>
<div class="c" style="left:796px;top:362px;width:96px;text-align:right">100</div>
<div class="c" style="left:900.500px;top:362px;width:90px;color:#43a047">200</div>
<div class="rn" style="top:384px">12</div>
<div class="abs" style="left:65px;top:384px;width:10px;height:22px;background:#17375f"></div>
<div class="abs" style="left:75px;top:384px;width:10px;height:22px;background:#1d4a80"></div>
<div class="abs" style="left:85px;top:384px;width:10px;height:22px;background:#22589d"></div>
<div class="abs" style="left:95px;top:384px;width:10px;height:22px;background:#2a6abc"></div>
<div class="abs" style="left:105px;top:384px;width:891px;height:22px;background:#fff;border-bottom:1px dashed #c0c0c0"></div>
<div class="abs" style="left:194px;top:384px;width:0;height:22px;border-left:1px dashed #c0c0c0"></div>
<div class="abs" style="left:561px;top:384px;width:0;height:22px;border-left:1px dashed #c0c0c0"></div>
<div class="abs" style="left:678px;top:384px;width:0;height:22px;border-left:1px dashed #c0c0c0"></div>
<div class="abs" style="left:796px;top:384px;width:0;height:22px;border-left:1px dashed #c0c0c0"></div>
<div class="abs" style="left:896px;top:384px;width:0;height:22px;border-left:1px dashed #c0c0c0"></div>
<div class="cb" style="left:107px;top:389px;border:1.500px solid #222;background:#fff"></div>
<div class="c" style="left:129px;top:384px;width:65px">02.01.04</div>
<div class="c" style="left:199px;top:384px;width:360px">Устройство буронабивных свай захватка 4</div>
<div class="c dt" style="left:561px;top:384px;width:117px;text-align:center">12.05.2025 09:00</div>
<div class="c dt" style="left:678px;top:384px;width:118px;text-align:center">13.05.2025 18:00</div>
<div class="c" style="left:796px;top:384px;width:96px;text-align:right">100</div>
<div class="c" style="left:900.500px;top:384px;width:90px;color:#43a047">200</div>
<div class="rn" style="top:406px">13</div>
<div class="abs" style="left:65px;top:406px;width:10px;height:22px;background:#17375f"></div>
<div class="abs" style="left:75px;top:406px;width:10px;height:22px;background:#1d4a80"></div>
<div class="abs" style="left:85px;top:406px;width:10px;height:22px;background:#22589d"></div>
<div class="abs" style="left:95px;top:406px;width:10px;height:22px;background:#2a6abc"></div>
<div class="abs" style="left:105px;top:406px;width:891px;height:22px;background:#fff;border-bottom:1px dashed #c0c0c0"></div>
<div class="abs" style="left:194px;top:406px;width:0;height:22px;border-left:1px dashed #c0c0c0"></div>
<div class="abs" style="left:561px;top:406px;width:0;height:22px;border-left:1px dashed #c0c0c0"></div>
<div class="abs" style="left:678px;top:406px;width:0;height:22px;border-left:1px dashed #c0c0c0"></div>
<div class="abs" style="left:796px;top:406px;width:0;height:22px;border-left:1px dashed #c0c0c0"></div>
<div class="abs" style="left:896px;top:406px;width:0;height:22px;border-left:1px dashed #c0c0c0"></div>
<div class="cb" style="left:107px;top:411px;border:1.500px solid #222;background:#fff"></div>
<div class="c" style="left:129px;top:406px;width:65px">02.01.05</div>
<div class="c" style="left:199px;top:406px;width:360px">Устройство фундаментной плиты</div>
<div class="c dt" style="left:561px;top:406px;width:117px;text-align:center">14.05.2025 09:00</div>
<div class="c dt" style="left:678px;top:406px;width:118px;text-align:center">14.05.2025 18:00</div>
<div class="c" style="left:796px;top:406px;width:96px;text-align:right">100</div>
<div class="c" style="left:900.500px;top:406px;width:90px;color:#43a047">200</div>
<div class="rn" style="top:428px">14</div>
<div class="abs" style="left:65px;top:428px;width:10px;height:22px;background:#17375f"></div>
<div class="abs" style="left:75px;top:428px;width:10px;height:22px;background:#1d4a80"></div>
<div class="abs" style="left:85px;top:428px;width:10px;height:22px;background:#22589d"></div>
<div class="abs" style="left:95px;top:428px;width:902px;height:22px;background:#2a6abc"></div>
<div class="abs" style="left:95.3px;top:438px;width:9.400px;height:2px;background:#fff"></div>
<div class="cb" style="left:107px;top:433px;border:1.500px solid #fff"></div>
<div class="c sc" style="left:129px;top:428px;width:65px">OP_syn.1.1</div>
<div class="c sb" style="left:199px;top:428px;width:360px">Монолитные работы подземной части</div>
<div class="c sd" style="left:561px;top:428px;width:117px;text-align:center">19.05.2025 09:00</div>
<div class="c sd" style="left:678px;top:428px;width:118px;text-align:center">29.05.2025 18:00</div>
<div class="c sd" style="left:796px;top:428px;width:96px;text-align:right">100</div>
<div class="rn" style="top:450px">15</div>
<div class="abs" style="left:65px;top:450px;width:10px;height:22px;background:#17375f"></div>
<div class="abs" style="left:75px;top:450px;width:10px;height:22px;background:#1d4a80"></div>
<div class="abs" style="left:85px;top:450px;width:10px;height:22px;background:#22589d"></div>
<div class="abs" style="left:95px;top:450px;width:10px;height:22px;background:#2a6abc"></div>
<div class="abs" style="left:105px;top:450px;width:891px;height:22px;background:#fff;border-bottom:1px dashed #c0c0c0"></div>
<div class="abs" style="left:194px;top:450px;width:0;height:22px;border-left:1px dashed #c0c0c0"></div>
<div class="abs" style="left:561px;top:450px;width:0;height:22px;border-left:1px dashed #c0c0c0"></div>
<div class="abs" style="left:678px;top:450px;width:0;height:22px;border-left:1px dashed #c0c0c0"></div>
<div class="abs" style="left:796px;top:450px;width:0;height:22px;border-left:1px dashed #c0c0c0"></div>
<div class="abs" style="left:896px;top:450px;width:0;height:22px;border-left:1px dashed #c0c0c0"></div>
<div class="cb" style="left:107px;top:455px;border:1.500px solid #222;background:#fff"></div>
<div class="c" style="left:129px;top:450px;width:65px">02.02.01</div>
<div class="c" style="left:199px;top:450px;width:360px">Устройство монолитных стен цокольного этажа</div>
<div class="c dt" style="left:561px;top:450px;width:117px;text-align:center">19.05.2025 09:00</div>
<div class="c dt" style="left:678px;top:450px;width:118px;text-align:center">20.05.2025 18:00</div>
<div class="c" style="left:796px;top:450px;width:96px;text-align:right">100</div>
<div class="c" style="left:900.500px;top:450px;width:90px;color:#43a047">300</div>
<div class="rn" style="top:472px">16</div>
<div class="abs" style="left:65px;top:472px;width:10px;height:22px;background:#17375f"></div>
<div class="abs" style="left:75px;top:472px;width:10px;height:22px;background:#1d4a80"></div>
<div class="abs" style="left:85px;top:472px;width:10px;height:22px;background:#22589d"></div>
<div class="abs" style="left:95px;top:472px;width:10px;height:22px;background:#2a6abc"></div>
<div class="abs" style="left:105px;top:472px;width:891px;height:22px;background:#fff;border-bottom:1px dashed #c0c0c0"></div>
<div class="abs" style="left:194px;top:472px;width:0;height:22px;border-left:1px dashed #c0c0c0"></div>
<div class="abs" style="left:561px;top:472px;width:0;height:22px;border-left:1px dashed #c0c0c0"></div>
<div class="abs" style="left:678px;top:472px;width:0;height:22px;border-left:1px dashed #c0c0c0"></div>
<div class="abs" style="left:796px;top:472px;width:0;height:22px;border-left:1px dashed #c0c0c0"></div>
<div class="abs" style="left:896px;top:472px;width:0;height:22px;border-left:1px dashed #c0c0c0"></div>
<div class="cb" style="left:107px;top:477px;border:1.500px solid #222;background:#fff"></div>
<div class="c" style="left:129px;top:472px;width:65px">02.02.02</div>
<div class="c" style="left:199px;top:472px;width:360px">Устройство монолитного перекрытия цокольного этажа</div>
<div class="c dt" style="left:561px;top:472px;width:117px;text-align:center">21.05.2025 09:00</div>
<div class="c dt" style="left:678px;top:472px;width:118px;text-align:center">25.05.2025 18:00</div>
<div class="c" style="left:796px;top:472px;width:96px;text-align:right">100</div>
<div class="c" style="left:900.500px;top:472px;width:90px;color:#43a047">300</div>
<div class="rn" style="top:494px">17</div>
<div class="abs" style="left:65px;top:494px;width:10px;height:22px;background:#17375f"></div>
<div class="abs" style="left:75px;top:494px;width:10px;height:22px;background:#1d4a80"></div>
<div class="abs" style="left:85px;top:494px;width:10px;height:22px;background:#22589d"></div>
<div class="abs" style="left:95px;top:494px;width:10px;height:22px;background:#2a6abc"></div>
<div class="abs" style="left:105px;top:494px;width:891px;height:22px;background:#fff;border-bottom:1px dashed #c0c0c0"></div>
<div class="abs" style="left:194px;top:494px;width:0;height:22px;border-left:1px dashed #c0c0c0"></div>
<div class="abs" style="left:561px;top:494px;width:0;height:22px;border-left:1px dashed #c0c0c0"></div>
<div class="abs" style="left:678px;top:494px;width:0;height:22px;border-left:1px dashed #c0c0c0"></div>
<div class="abs" style="left:796px;top:494px;width:0;height:22px;border-left:1px dashed #c0c0c0"></div>
<div class="abs" style="left:896px;top:494px;width:0;height:22px;border-left:1px dashed #c0c0c0"></div>
<div class="cb" style="left:107px;top:499px;border:1.500px solid #222;background:#fff"></div>
<div class="c" style="left:129px;top:494px;width:65px">02.02.03</div>
<div class="c" style="left:199px;top:494px;width:360px">Устройство монолитной входной лестницы</div>
<div class="c dt" style="left:561px;top:494px;width:117px;text-align:center">28.05.2025 09:00</div>
<div class="c dt" style="left:678px;top:494px;width:118px;text-align:center">29.05.2025 18:00</div>
<div class="c" style="left:796px;top:494px;width:96px;text-align:right">100</div>
<div class="c" style="left:900.500px;top:494px;width:90px;color:#43a047">300</div>
<div class="rn" style="top:516px">18</div>
<div class="abs" style="left:65px;top:516px;width:10px;height:22px;background:#17375f"></div>
<div class="abs" style="left:75px;top:516px;width:10px;height:22px;background:#1d4a80"></div>
<div class="abs" style="left:85px;top:516px;width:10px;height:22px;background:#22589d"></div>
<div class="abs" style="left:95px;top:516px;width:902px;height:22px;background:#2a6abc"></div>
<div class="abs" style="left:95.3px;top:526px;width:9.400px;height:2px;background:#fff"></div>
<div class="cb" style="left:107px;top:521px;border:1.500px solid #fff"></div>
<div class="c sc" style="left:129px;top:516px;width:65px">OP_syn.1.1</div>
<div class="c sb" style="left:199px;top:516px;width:360px">Монолитные работы надземной части</div>
<div class="c sd" style="left:561px;top:516px;width:117px;text-align:center">26.05.2025 09:00</div>
<div class="c sd" style="left:678px;top:516px;width:118px;text-align:center">21.06.2025 18:00</div>
<div class="c sd" style="left:796px;top:516px;width:96px;text-align:right">100</div>
<div class="rn" style="top:538px">19</div>
<div class="abs" style="left:65px;top:538px;width:10px;height:22px;background:#17375f"></div>
<div class="abs" style="left:75px;top:538px;width:10px;height:22px;background:#1d4a80"></div>
<div class="abs" style="left:85px;top:538px;width:10px;height:22px;background:#22589d"></div>
<div class="abs" style="left:95px;top:538px;width:10px;height:22px;background:#2a6abc"></div>
<div class="abs" style="left:105px;top:538px;width:891px;height:22px;background:#fff;border-bottom:1px dashed #c0c0c0"></div>
<div class="abs" style="left:194px;top:538px;width:0;height:22px;border-left:1px dashed #c0c0c0"></div>
<div class="abs" style="left:561px;top:538px;width:0;height:22px;border-left:1px dashed #c0c0c0"></div>
<div class="abs" style="left:678px;top:538px;width:0;height:22px;border-left:1px dashed #c0c0c0"></div>
<div class="abs" style="left:796px;top:538px;width:0;height:22px;border-left:1px dashed #c0c0c0"></div>
<div class="abs" style="left:896px;top:538px;width:0;height:22px;border-left:1px dashed #c0c0c0"></div>
<div class="cb" style="left:107px;top:543px;border:1.500px solid #222;background:#fff"></div>
<div class="c" style="left:129px;top:538px;width:65px">02.03.01</div>
<div class="c" style="left:199px;top:538px;width:360px">Устройство наружных монолитных стен 1-го этажа</div>
<div class="c dt" style="left:561px;top:538px;width:117px;text-align:center">26.05.2025 09:00</div>
<div class="c dt" style="left:678px;top:538px;width:118px;text-align:center">27.05.2025 18:00</div>
<div class="c" style="left:796px;top:538px;width:96px;text-align:right">100</div>
<div class="rn" style="top:560px">20</div>
<div class="abs" style="left:65px;top:560px;width:10px;height:22px;background:#17375f"></div>
<div class="abs" style="left:75px;top:560px;width:10px;height:22px;background:#1d4a80"></div>
<div class="abs" style="left:85px;top:560px;width:10px;height:22px;background:#22589d"></div>
<div class="abs" style="left:95px;top:560px;width:10px;height:22px;background:#2a6abc"></div>
<div class="abs" style="left:105px;top:560px;width:891px;height:22px;background:#fff;border-bottom:1px dashed #c0c0c0"></div>
<div class="abs" style="left:194px;top:560px;width:0;height:22px;border-left:1px dashed #c0c0c0"></div>
<div class="abs" style="left:561px;top:560px;width:0;height:22px;border-left:1px dashed #c0c0c0"></div>
<div class="abs" style="left:678px;top:560px;width:0;height:22px;border-left:1px dashed #c0c0c0"></div>
<div class="abs" style="left:796px;top:560px;width:0;height:22px;border-left:1px dashed #c0c0c0"></div>
<div class="abs" style="left:896px;top:560px;width:0;height:22px;border-left:1px dashed #c0c0c0"></div>
<div class="cb" style="left:107px;top:565px;border:1.500px solid #222;background:#fff"></div>
<div class="c" style="left:129px;top:560px;width:65px">02.03.02</div>
<div class="c" style="left:199px;top:560px;width:360px">Устройство внутренних монолитных стен 1-го этажа</div>
<div class="c dt" style="left:561px;top:560px;width:117px;text-align:center">26.05.2025 09:00</div>
<div class="c dt" style="left:678px;top:560px;width:118px;text-align:center">27.05.2025 18:00</div>
<div class="c" style="left:796px;top:560px;width:96px;text-align:right">100</div>
<div class="rn" style="top:582px">21</div>
<div class="abs" style="left:65px;top:582px;width:10px;height:22px;background:#17375f"></div>
<div class="abs" style="left:75px;top:582px;width:10px;height:22px;background:#1d4a80"></div>
<div class="abs" style="left:85px;top:582px;width:10px;height:22px;background:#22589d"></div>
<div class="abs" style="left:95px;top:582px;width:10px;height:22px;background:#2a6abc"></div>
<div class="abs" style="left:105px;top:582px;width:891px;height:22px;background:#fff;border-bottom:1px dashed #c0c0c0"></div>
<div class="abs" style="left:194px;top:582px;width:0;height:22px;border-left:1px dashed #c0c0c0"></div>
<div class="abs" style="left:561px;top:582px;width:0;height:22px;border-left:1px dashed #c0c0c0"></div>
<div class="abs" style="left:678px;top:582px;width:0;height:22px;border-left:1px dashed #c0c0c0"></div>
<div class="abs" style="left:796px;top:582px;width:0;height:22px;border-left:1px dashed #c0c0c0"></div>
<div class="abs" style="left:896px;top:582px;width:0;height:22px;border-left:1px dashed #c0c0c0"></div>
<div class="cb" style="left:107px;top:587px;border:1.500px solid #222;background:#fff"></div>
<div class="c" style="left:129px;top:582px;width:65px">02.03.03</div>
<div class="c" style="left:199px;top:582px;width:360px">Устройство монолитной лестницы 1-го этажа</div>
<div class="c dt" style="left:561px;top:582px;width:117px;text-align:center">28.05.2025 09:00</div>
<div class="c dt" style="left:678px;top:582px;width:118px;text-align:center">02.06.2025 18:00</div>
<div class="c" style="left:796px;top:582px;width:96px;text-align:right">100</div>
<div class="rn" style="top:604px">22</div>
<div class="abs" style="left:65px;top:604px;width:10px;height:22px;background:#17375f"></div>
<div class="abs" style="left:75px;top:604px;width:10px;height:22px;background:#1d4a80"></div>
<div class="abs" style="left:85px;top:604px;width:10px;height:22px;background:#22589d"></div>
<div class="abs" style="left:95px;top:604px;width:10px;height:22px;background:#2a6abc"></div>
<div class="abs" style="left:105px;top:604px;width:891px;height:22px;background:#fff;border-bottom:1px dashed #c0c0c0"></div>
<div class="abs" style="left:194px;top:604px;width:0;height:22px;border-left:1px dashed #c0c0c0"></div>
<div class="abs" style="left:561px;top:604px;width:0;height:22px;border-left:1px dashed #c0c0c0"></div>
<div class="abs" style="left:678px;top:604px;width:0;height:22px;border-left:1px dashed #c0c0c0"></div>
<div class="abs" style="left:796px;top:604px;width:0;height:22px;border-left:1px dashed #c0c0c0"></div>
<div class="abs" style="left:896px;top:604px;width:0;height:22px;border-left:1px dashed #c0c0c0"></div>
<div class="cb" style="left:107px;top:609px;border:1.500px solid #222;background:#fff"></div>
<div class="c" style="left:129px;top:604px;width:65px">02.03.04</div>
<div class="c" style="left:199px;top:604px;width:360px">Устройство монолитного перекрытия 1-го этажа</div>
<div class="c dt" style="left:561px;top:604px;width:117px;text-align:center">03.06.2025 09:00</div>
<div class="c dt" style="left:678px;top:604px;width:118px;text-align:center">05.06.2025 18:00</div>
<div class="c" style="left:796px;top:604px;width:96px;text-align:right">100</div>
<div class="abs" style="left:997px;top:340px;width:7px;height:22px;background:#fffdcc"></div>
<div class="abs" style="left:1005px;top:92px;width:6px;height:534px;background:#f3f3f6"></div>
<div class="abs" style="left:1003px;top:92px;width:1px;height:50px;background:#e0e0e6"></div>
<div class="abs" style="left:1005px;top:93px;width:5px;height:62px;background:#d6d6dc;border-radius:2.500px"></div>
<div class="abs" style="left:1017px;top:92px;width:899px;height:534px;background:#fff;overflow:hidden">
<svg style="left:0;top:0" width="899" height="534" viewBox="1017 92 899 534" font-family="Liberation Sans, sans-serif">
<rect x="1017" y="340" width="899" height="22" fill="#fffdcc"/>
<rect x="1017" y="106.3" width="899" height="1.400" fill="#d6d6dc"/>
<rect x="1017" y="123.3" width="899" height="1.400" fill="#d6d6dc"/>
<rect x="1017" y="140.3" width="899" height="1.400" fill="#d6d6dc"/>
<rect x="1021.9" y="107" width="1.400" height="17" fill="#d6d6dc"/>
<rect x="1564.7" y="107" width="1.400" height="17" fill="#d6d6dc"/>
<rect x="1091.9" y="124" width="1.400" height="17" fill="#d6d6dc"/>
<text x="1031.4" y="137.300" text-anchor="middle" font-size="12.500" fill="#222">28 - 4</text>
<rect x="1214.5" y="124" width="1.400" height="17" fill="#d6d6dc"/>
<text x="1153.9" y="137.300" text-anchor="middle" font-size="12.500" fill="#222">5 - 11</text>
<rect x="1337.1" y="124" width="1.400" height="17" fill="#d6d6dc"/>
<text x="1276.5" y="137.300" text-anchor="middle" font-size="12.500" fill="#222">12 - 18</text>
<rect x="1459.7" y="124" width="1.400" height="17" fill="#d6d6dc"/>
<text x="1399.1" y="137.300" text-anchor="middle" font-size="12.500" fill="#222">19 - 25</text>
<rect x="1582.2" y="124" width="1.400" height="17" fill="#d6d6dc"/>
<text x="1521.6" y="137.300" text-anchor="middle" font-size="12.500" fill="#222">26 - 1</text>
<rect x="1704.8" y="124" width="1.400" height="17" fill="#d6d6dc"/>
<text x="1644.2" y="137.300" text-anchor="middle" font-size="12.500" fill="#222">2 - 8</text>
<rect x="1827.4" y="124" width="1.400" height="17" fill="#d6d6dc"/>
<text x="1766.8" y="137.300" text-anchor="middle" font-size="12.500" fill="#222">9 - 15</text>
<rect x="1949.9" y="124" width="1.400" height="17" fill="#d6d6dc"/>
<text x="1889.3" y="137.300" text-anchor="middle" font-size="12.500" fill="#222">16 - 22</text>
<text x="1469" y="103.200" text-anchor="middle" font-size="12.500" fill="#222">2025</text>
<text x="1285.600" y="120.200" text-anchor="middle" font-size="12.500" fill="#222">май</text>
<text x="1744" y="120.200" text-anchor="middle" font-size="12.500" fill="#222">июнь</text>
<path d="M1017 142.700H1916" stroke="#e8e8e8" stroke-width="1.200" stroke-dasharray="2.600 3.400" fill="none"/>
<path d="M1017 163.7H1916" stroke="#e6e6e6" stroke-width="1.200" stroke-dasharray="2.600 3.400" fill="none"/>
<path d="M1017 185.7H1916" stroke="#e6e6e6" stroke-width="1.200" stroke-dasharray="2.600 3.400" fill="none"/>
<path d="M1017 207.7H1916" stroke="#e6e6e6" stroke-width="1.200" stroke-dasharray="2.600 3.400" fill="none"/>
<path d="M1017 229.7H1916" stroke="#e6e6e6" stroke-width="1.200" stroke-dasharray="2.600 3.400" fill="none"/>
<path d="M1017 251.7H1916" stroke="#e6e6e6" stroke-width="1.200" stroke-dasharray="2.600 3.400" fill="none"/>
<path d="M1017 273.7H1916" stroke="#e6e6e6" stroke-width="1.200" stroke-dasharray="2.600 3.400" fill="none"/>
<path d="M1017 295.7H1916" stroke="#e6e6e6" stroke-width="1.200" stroke-dasharray="2.600 3.400" fill="none"/>
<path d="M1017 317.7H1916" stroke="#e6e6e6" stroke-width="1.200" stroke-dasharray="2.600 3.400" fill="none"/>
<path d="M1017 339.7H1916" stroke="#e6e6e6" stroke-width="1.200" stroke-dasharray="2.600 3.400" fill="none"/>
<path d="M1017 361.7H1916" stroke="#e6e6e6" stroke-width="1.200" stroke-dasharray="2.600 3.400" fill="none"/>
<path d="M1017 383.7H1916" stroke="#e6e6e6" stroke-width="1.200" stroke-dasharray="2.600 3.400" fill="none"/>
<path d="M1017 405.7H1916" stroke="#e6e6e6" stroke-width="1.200" stroke-dasharray="2.600 3.400" fill="none"/>
<path d="M1017 427.7H1916" stroke="#e6e6e6" stroke-width="1.200" stroke-dasharray="2.600 3.400" fill="none"/>
<path d="M1017 449.7H1916" stroke="#e6e6e6" stroke-width="1.200" stroke-dasharray="2.600 3.400" fill="none"/>
<path d="M1017 471.7H1916" stroke="#e6e6e6" stroke-width="1.200" stroke-dasharray="2.600 3.400" fill="none"/>
<path d="M1017 493.7H1916" stroke="#e6e6e6" stroke-width="1.200" stroke-dasharray="2.600 3.400" fill="none"/>
<path d="M1017 515.7H1916" stroke="#e6e6e6" stroke-width="1.200" stroke-dasharray="2.600 3.400" fill="none"/>
<path d="M1017 537.7H1916" stroke="#e6e6e6" stroke-width="1.200" stroke-dasharray="2.600 3.400" fill="none"/>
<path d="M1017 559.7H1916" stroke="#e6e6e6" stroke-width="1.200" stroke-dasharray="2.600 3.400" fill="none"/>
<path d="M1017 581.7H1916" stroke="#e6e6e6" stroke-width="1.200" stroke-dasharray="2.600 3.400" fill="none"/>
<path d="M1017 603.7H1916" stroke="#e6e6e6" stroke-width="1.200" stroke-dasharray="2.600 3.400" fill="none"/>
<path d="M1017 625.7H1916" stroke="#e6e6e6" stroke-width="1.200" stroke-dasharray="2.600 3.400" fill="none"/>
<rect x="1017" y="145.5" width="899" height="3.600" fill="#adadad"/>
<rect x="1017" y="167.5" width="899" height="3.600" fill="#adadad"/>
<rect x="1017" y="277.5" width="891" height="3.600" fill="#adadad"/><path d="M1903 281H1908V285z" fill="#adadad"/>
<rect x="1017" y="519.5" width="191" height="3.600" fill="#adadad"/><path d="M1203 523H1208V527z" fill="#adadad"/>
<rect x="1029.2" y="154.2" width="906.8" height="4.400" fill="#000"/>
<path d="M1029.2 158.4h5.500l-5.500 4z" fill="#000"/>
<rect x="1029.2" y="176.2" width="906.8" height="4.400" fill="#000"/>
<path d="M1029.2 180.4h5.500l-5.500 4z" fill="#000"/>
<rect x="1029.2" y="198.2" width="76.6" height="4.400" fill="#000"/>
<path d="M1029.2 202.4h5.500l-5.500 4z" fill="#000"/>
<path d="M1105.8 202.4h-5.500l5.500 4z" fill="#000"/>
<text x="1126.8" y="202.8" font-size="13" font-weight="bold" letter-spacing="-0.750" fill="#555">Земляные работы</text>
<rect x="1029.2" y="221.2" width="6.6" height="7.0" fill="#000"/>
<text x="1055.9" y="224.6" font-size="12.950" fill="#666">Вертикальная планировка территории</text>
<rect x="1052.7" y="243.2" width="17.5" height="7.0" fill="#000"/>
<rect x="1057.1" y="243.2" width="8.9" height="7.0" fill="#0f79e0"/>
<text x="1090.4" y="246.6" font-size="12.950" fill="#666">Устройство котлована</text>
<rect x="1081.7" y="265.2" width="24.1" height="7.0" fill="#0f79e0"/>
<rect x="1081.7" y="265.2" width="4.200" height="7.0" fill="#000"/>
<path d="M1086.4 270.1C1088.3 270.1 1088.5 266.7 1090.2 266.7S1094.3 270.5 1096.7 270.5S1100.7 266.7 1102.4 266.7S1104.7 268.2 1105.9 268.5" stroke="#d6eaff" stroke-width="1.300" fill="none"/>
<text x="1126.0" y="268.6" font-size="12.950" fill="#666">Устройство песчаного основания</text>
<rect x="1116.7" y="286.2" width="819.3" height="4.400" fill="#000"/>
<path d="M1116.7 290.4h5.500l-5.500 4z" fill="#000"/>
<rect x="1116.7" y="308.2" width="146.6" height="4.400" fill="#000"/>
<path d="M1116.7 312.4h5.500l-5.500 4z" fill="#000"/>
<path d="M1263.4 312.4h-5.500l5.500 4z" fill="#000"/>
<text x="1284.4" y="312.8" font-size="13" font-weight="bold" letter-spacing="-0.750" fill="#555">Фундамент</text>
<rect x="1116.7" y="331.2" width="24.1" height="7.0" fill="#0f79e0"/>
<text x="1161.0" y="334.6" font-size="12.950" fill="#666">Устройство буронабивных свай захватка 1</text>
<rect x="1151.7" y="353.2" width="24.1" height="7.0" fill="#0f79e0"/>
<text x="1196.0" y="356.6" font-size="12.950" fill="#666">Устройство буронабивных свай захватка 2</text>
<rect x="1186.8" y="375.2" width="24.1" height="7.0" fill="#0f79e0"/>
<text x="1231.0" y="378.6" font-size="12.950" fill="#666">Устройство буронабивных свай захватка 3</text>
<rect x="1221.8" y="397.2" width="24.1" height="7.0" fill="#0f79e0"/>
<text x="1266.1" y="400.6" font-size="12.950" fill="#666">Устройство буронабивных свай захватка 4</text>
<rect x="1256.8" y="419.2" width="6.6" height="7.0" fill="#0f79e0"/>
<text x="1283.6" y="422.6" font-size="12.950" fill="#666">Устройство фундаментной плиты</text>
<rect x="1344.3" y="440.2" width="181.7" height="4.400" fill="#000"/>
<path d="M1344.3 444.4h5.500l-5.500 4z" fill="#000"/>
<path d="M1526.0 444.4h-5.500l5.500 4z" fill="#000"/>
<text x="1547.0" y="444.8" font-size="13" font-weight="bold" letter-spacing="-0.750" fill="#555">Монолитные работы подземной части</text>
<rect x="1344.3" y="463.2" width="24.1" height="7.0" fill="#0f79e0"/>
<text x="1388.6" y="466.6" font-size="12.950" fill="#666">Устройство монолитных стен цокольного этажа</text>
<rect x="1379.4" y="485.2" width="76.6" height="7.0" fill="#0f79e0"/>
<text x="1476.2" y="488.6" font-size="12.950" fill="#666">Устройство монолитного перекрытия цокольного этажа</text>
<rect x="1501.9" y="507.2" width="24.1" height="7.0" fill="#0f79e0"/>
<text x="1546.2" y="510.6" font-size="12.950" fill="#666">Устройство монолитной входной лестницы</text>
<rect x="1466.9" y="528.2" width="461.8" height="4.400" fill="#000"/>
<path d="M1466.9 532.4h5.500l-5.500 4z" fill="#000"/>
<path d="M1928.7 532.4h-5.500l5.500 4z" fill="#000"/>
<rect x="1466.9" y="551.2" width="24.1" height="7.0" fill="#0f79e0"/>
<text x="1511.2" y="554.6" font-size="12.950" fill="#666">Устройство наружных монолитных стен 1-го этажа</text>
<rect x="1466.9" y="573.2" width="24.1" height="7.0" fill="#0f79e0"/>
<text x="1511.2" y="576.6" font-size="12.950" fill="#666">Устройство внутренних монолитных стен 1-го этажа</text>
<rect x="1501.9" y="595.2" width="94.1" height="7.0" fill="#0f79e0"/>
<text x="1616.3" y="598.6" font-size="12.950" fill="#666">Устройство монолитной лестницы 1-го этажа</text>
<rect x="1607.0" y="617.2" width="41.6" height="7.0" fill="#0f79e0"/>
<text x="1668.8" y="620.6" font-size="12.950" fill="#666">Устройство монолитного перекрытия 1-го этажа</text>
<path d="M1105.4 267V275.3H1102.6V335.0H1110.7" stroke="#000" stroke-width="1.300" fill="none"/><path d="M1116.7 335.0l-7.200-3.800v7.600z" fill="#000"/>
<path d="M1140.4 334.9V341.6H1137.4V357.0H1145.7" stroke="#000" stroke-width="1.300" fill="none"/><path d="M1151.7 357.0l-7.200-3.800v7.600z" fill="#000"/>
<path d="M1175.4 356.9V363.6H1172.4V379.0H1180.8" stroke="#000" stroke-width="1.300" fill="none"/><path d="M1186.8 379.0l-7.200-3.800v7.600z" fill="#000"/>
<path d="M1210.4 378.9V385.6H1207.4V401.0H1215.8" stroke="#000" stroke-width="1.300" fill="none"/><path d="M1221.8 401.0l-7.200-3.800v7.600z" fill="#000"/>
<path d="M1245.5 400.9V407.6H1242.5V423.0H1250.8" stroke="#000" stroke-width="1.300" fill="none"/><path d="M1256.8 423.0l-7.200-3.800v7.600z" fill="#000"/>
<path d="M1368.0 466.9V473.6H1365.0V489.0H1373.4" stroke="#000" stroke-width="1.300" fill="none"/><path d="M1379.4 489.0l-7.200-3.800v7.600z" fill="#000"/>
<path d="M1490.6 576.9V583.6H1487.6V599.0H1495.9" stroke="#000" stroke-width="1.300" fill="none"/><path d="M1501.9 599.0l-7.200-3.800v7.600z" fill="#000"/>
<path d="M1595.7 598.9V605.6H1592.7V621.0H1601.0" stroke="#000" stroke-width="1.300" fill="none"/><path d="M1607.0 621.0l-7.200-3.800v7.600z" fill="#000"/>
<path d="M1263.1 423V429H1330V467.0H1338.3" stroke="#000" stroke-width="1.300" fill="none"/><path d="M1344.3 467.0l-7.200-3.800v7.600z" fill="#000"/>
<path d="M1455.7 489V495.6H1452.6V555.0H1460.9" stroke="#000" stroke-width="1.300" fill="none"/><path d="M1466.9 555.0l-7.200-3.800v7.600z" fill="#000"/>
<path d="M1490.7 555V562.2H1452.7V577.0H1460.9" stroke="#000" stroke-width="1.300" fill="none"/><path d="M1466.9 577.0l-7.200-3.800v7.600z" fill="#000"/>
<path d="M1490.7 552V541.8H1487.4V511.0H1495.9" stroke="#000" stroke-width="1.300" fill="none"/><path d="M1501.9 511.0l-7.200-3.800v7.600z" fill="#000"/>
<path d="M1526.0 511.0H1533" stroke="#000" stroke-width="1.300" fill="none"/><path d="M1539.3 511.0l-7.200-3.800v7.600z" fill="#000"/>
<path d="M1539.800 507.5v7" stroke="#000" stroke-width="1.300" fill="none"/>
<rect x="1914" y="142" width="2" height="484" fill="#f6f6f8"/>
<rect x="1914" y="142" width="3" height="51" rx="1.500" fill="#dedee2"/>
</svg></div>
<div class="abs" style="left:1011px;top:47px;width:6px;height:580px;background:#b6b6be"></div>
<div class="abs" style="left:43px;top:626px;width:1873px;height:5px;background:#b6b6be"></div>
<div class="abs" style="left:43px;top:631px;width:1873px;height:281px;background:#fff"></div>
<div class="t" style="left:91.1px;top:645.500px;font-size:17.400px;color:#1976d2">Карточка работы</div>
<div class="t" style="left:322.5px;top:645.500px;font-size:17.400px;color:#444">Связи работы</div>
<div class="t" style="left:528.7px;top:645.500px;font-size:17.400px;color:#444">Связанные графики</div>
<div class="t" style="left:784.8px;top:645.500px;font-size:17.400px;color:#444">Справочники</div>
<div class="t" style="left:987.2px;top:645.500px;font-size:17.400px;color:#444">Суточное планирование</div>
<div class="t" style="left:1278px;top:645.500px;font-size:17.400px;color:#444"><span style='letter-spacing:0.300px'>Фото / Документация</span></div>
<div class="t" style="left:1547px;top:645.500px;font-size:17.400px;color:#444">Запросы и поручения</div>
<div class="t" style="left:1817px;top:645.500px;font-size:17.400px;color:#444">Табели</div>
<div class="abs" style="left:43px;top:674px;width:232px;height:2px;background:#1976d2"></div>
<div class="t" style="left:59px;top:697px;font-size:14.500px;font-weight:bold;color:#111;letter-spacing:-0.450px">Тип</div>
<div class="t" style="left:59px;top:727px;font-size:14.500px;font-weight:bold;color:#111;letter-spacing:-0.450px">Шифр</div>
<div class="t" style="left:59px;top:757px;font-size:14.500px;font-weight:bold;color:#111;letter-spacing:-0.450px">Статус</div>
<div class="abs" style="left:119px;top:692px;width:162px;height:22px;background:#fff;border:1px solid #b8b8c0;border-radius:4px"></div>
<div class="t" style="left:131px;top:696px;font-size:14.800px;color:#222;letter-spacing:0.300px">Работа</div>
<svg style="left:252px;top:700.5px" width="11" height="6" viewBox="0 0 11 6"><path d="M0.300 0h10.4L5.5 6z" fill="#444"/></svg>
<div class="abs" style="left:119px;top:722px;width:162px;height:22px;background:#fff;border:1px solid #b8b8c0;border-radius:4px"></div>
<div class="t" style="left:131px;top:726px;font-size:14.800px;color:#222;letter-spacing:0.300px">02.01.02</div>
<div class="abs" style="left:119px;top:752px;width:162px;height:22px;background:#fff;border:1px solid #b8b8c0;border-radius:4px"></div>
<div class="t" style="left:131px;top:756px;font-size:14.800px;color:#222;letter-spacing:0.300px">Завершена</div>
<svg style="left:252px;top:760.5px" width="11" height="6" viewBox="0 0 11 6"><path d="M0.300 0h10.4L5.5 6z" fill="#444"/></svg>
<div class="abs" style="left:289px;top:692px;width:530px;height:50px;background:#fff;border:1px solid #b8b8c0;border-radius:4px"></div>
<div class="t" style="left:301px;top:706px;font-size:18.200px;font-weight:bold;color:#111">Устройство буронабивных&nbsp; свай захватка 2</div>
<div class="t" style="left:290px;top:755px;font-size:14.800px;color:#222">Сценарий</div>
<div class="abs" style="left:362px;top:750px;width:457px;height:22px;background:#eeeef1;border-radius:4px"></div>
<div class="t" style="left:362px;top:755px;width:324px;text-align:center;font-size:13.300px;color:#222">Сценария нет</div>
<svg style="left:797px;top:752.500px" width="17" height="17" viewBox="0 0 17 17" fill="none" stroke="#aaa" stroke-width="1.100"><path d="M8.500 1l2 1.200 2.300-0.200 0.900 2.100 2 1.200-0.500 2.200 0.500 2.300-2 1.200-0.900 2.100-2.300-0.200-2 1.200-2-1.200-2.300 0.200-0.900-2.100-2-1.200 0.500-2.300-0.500-2.200 2-1.200 0.900-2.100 2.300 0.200z"/><path d="M5.500 5.500l3 3-3 3M9 5.500l3 3-3 3"/></svg>
<div class="abs" style="left:827px;top:692px;width:146px;height:82px;background:#fff;border:1px solid #4a90e2;border-radius:4px;overflow:hidden"><div style="height:33px;background:#5c9ee2"></div></div>
<div class="abs" style="left:858.5px;top:683.800px;width:9px;height:15.700px;background:#fff;border:1px solid #5c9ee2;border-radius:2.500px"></div>
<div class="abs" style="left:931.5px;top:683.800px;width:9px;height:15.700px;background:#fff;border:1px solid #5c9ee2;border-radius:2.500px"></div>
<div class="t" style="left:827px;top:703.500px;width:146px;text-align:center;font-size:13.300px;color:#fff;text-decoration:underline">PLAN-R: 7 дней</div>
<div class="abs" style="left:864px;top:730px;width:72px;height:22px;background:#fff;border:1px solid #b8b8c0;border-radius:4px"></div>
<div class="t" style="left:864px;top:733.500px;width:72px;text-align:center;font-size:14.800px;color:#222">16</div>
<div class="t" style="left:944px;top:736px;font-size:11.500px;color:#222">ч.</div>
<div class="t" style="left:827px;top:756.600px;width:146px;text-align:center;font-size:12.900px;color:#222">Календарных: 2 дн.</div>
<svg style="left:838px;top:731px" width="20" height="20" viewBox="0 0 20 20" fill="none" stroke="#444" stroke-width="1.200" stroke-linecap="round"><circle cx="4" cy="4" r="2.200"/><path d="M5.500 5.500l6 6"/><path d="M10 9.500l3.500-1.300 3.500 3.500a3.300 3.300 0 0 1-4.700 4.700l-3.500-3.500z"/></svg>
<div class="abs" style="left:51px;top:782px;width:922px;height:24px;background:#1976d2"></div>
<div class="t" style="left:69.500px;top:787px;font-size:14px;color:#fff;letter-spacing:1px;word-spacing:1.500px">08.05.2025&nbsp;09:00</div>
<div class="t" style="left:495px;top:787px;font-size:14.500px;color:#fff">100 %</div>
<div class="t" style="left:818px;top:787px;font-size:14px;color:#fff;letter-spacing:1px;word-spacing:1.500px">09.05.2025&nbsp;18:00</div>
<div class="t" style="left:51px;top:824px;font-size:14.300px;font-weight:bold;color:#111">Ограничения</div>
<div class="abs" style="left:204px;top:828.500px;width:768px;height:3px;background:#b4b4bc"></div>
<div class="t" style="left:51px;top:852px;font-size:14.500px;color:#222">Начало</div>
<div class="abs" style="left:118px;top:847px;width:149px;height:22px;background:#fff;border:1px solid #b8b8c0;border-radius:4px"></div>
<svg style="left:237.5px;top:855.5px" width="11" height="6" viewBox="0 0 11 6"><path d="M0.300 0h10.4L5.5 6z" fill="#444"/></svg>
<div class="t" style="left:727px;top:852px;font-size:15px;color:#222">Окончание</div>
<div class="abs" style="left:819px;top:847px;width:150px;height:22px;background:#fff;border:1px solid #b8b8c0;border-radius:4px"></div>
<svg style="left:938.5px;top:855.5px" width="11" height="6" viewBox="0 0 11 6"><path d="M0.300 0h10.4L5.5 6z" fill="#444"/></svg>
<div class="abs" style="left:51px;top:885px;width:40px;height:20px;background:#1976d2;border-radius:4px;box-shadow:0 1px 2px rgba(0,0,0,.35)"></div>
<svg style="left:64px;top:889px" width="14" height="12" viewBox="0 0 14 12" fill="none" stroke="#fff" stroke-width="1.300" stroke-linecap="round" stroke-linejoin="round"><path d="M6.500 1L1.500 6l5 5M12.500 1L7.500 6l5 5"/></svg>
<div class="t" style="left:107px;top:889px;font-size:15px;color:#222">Начало как можно раньше</div>
<div class="t" style="left:716px;top:889px;font-size:15.200px;color:#222">Окончание как можно позже</div>
<div class="abs" style="left:933px;top:885px;width:40px;height:20px;background:#9e9e9e;border-radius:4px;box-shadow:0 1px 2px rgba(0,0,0,.35)"></div>
<svg style="left:946px;top:889px" width="14" height="12" viewBox="0 0 14 12" fill="none" stroke="#fff" stroke-width="1.300" stroke-linecap="round" stroke-linejoin="round"><path d="M1.500 1l5 5-5 5M7.500 1l5 5-5 5"/></svg>
<div class="abs" style="left:981px;top:684px;width:1px;height:228px;background:#c0c0c8"></div>
<div class="t" style="left:990px;top:706px;font-size:14.300px;font-weight:bold;letter-spacing:-0.550px;color:#111">Атрибуты</div>
<div class="abs" style="left:1080px;top:692px;width:832px;height:40px;background:#fff;border:1px solid #b8b8c0;border-radius:4px"></div>
<div class="t" style="left:1092px;top:704px;font-size:15.600px;color:#888">Поиск</div>
<div class="t" style="left:990px;top:754.8px;font-size:14.900px;color:#222">Шифр</div>
<div class="t" style="left:1455.500px;top:753.6px;font-size:15.200px;color:#222">02.01.02</div>
<div class="abs" style="left:986px;top:782.0px;width:930px;height:1px;background:#c6c6cc"></div>
<div class="t" style="left:990px;top:796.8px;font-size:14.900px;color:#222">Наименование</div>
<div class="t" style="left:1455.500px;top:795.6px;font-size:15.200px;color:#222">Устройство буронабивных свай захватка 2</div>
<div class="abs" style="left:986px;top:824.0px;width:930px;height:1px;background:#c6c6cc"></div>
<div class="t" style="left:990px;top:838.8px;font-size:14.900px;color:#222">Старт</div>
<div class="t" style="left:1455.500px;top:837.6px;font-size:15.200px;color:#222">08.05.2025 09:00</div>
<div class="abs" style="left:986px;top:866.0px;width:930px;height:1px;background:#c6c6cc"></div>
<div class="t" style="left:990px;top:880.8px;font-size:14.900px;color:#222">Финиш</div>
<div class="t" style="left:1455.500px;top:879.6px;font-size:15.200px;color:#222">09.05.2025 18:00</div>
<div class="abs" style="left:986px;top:908.0px;width:930px;height:1px;background:#c6c6cc"></div>
<svg style="left:0;top:0" width="1916" height="912" viewBox="0 0 1916 912">
<path d="M1059 121.300H1002" stroke="#000" stroke-width="3.200" fill="none"/>
<path d="M991 121.300l12.500-5.800v11.600z" fill="#000"/>
<ellipse cx="1074.600" cy="121.300" rx="15.600" ry="17.500" fill="#fff" stroke="#000" stroke-width="2.800"/>
<text x="1074.600" y="128.600" text-anchor="middle" font-family="DejaVu Sans, sans-serif" font-size="20.300" fill="#000">1</text>
<path d="M1000 218.400H943" stroke="#000" stroke-width="3.200" fill="none"/>
<path d="M932 218.400l12-5.800v11.600z" fill="#000"/>
<ellipse cx="1015.500" cy="219.300" rx="15.600" ry="17.400" fill="#fff" stroke="#000" stroke-width="2.800"/>
<text x="1015.500" y="226.500" text-anchor="middle" font-family="DejaVu Sans, sans-serif" font-size="20" fill="#000">2</text>
</svg>
</body></html>
